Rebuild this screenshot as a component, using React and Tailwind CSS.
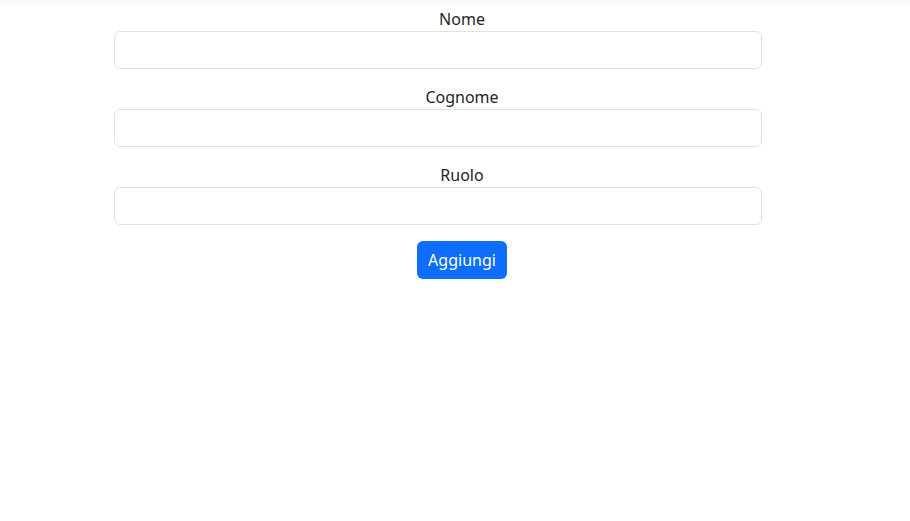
export default function App() {
  const fields = ["Nome", "Cognome", "Ruolo"];
  return (
    <div className="min-h-[521px] bg-white text-[#212529] text-[16px]" style={{ fontFamily: '"Segoe UI", "Noto Sans", sans-serif' }}>
      <div className="h-[4px] bg-[#fafafa]" />
      <div className="ml-[114px] w-[696px] pt-[3px] text-center">
        {fields.map((f) => (
          <div key={f} className="mb-4">
            <label className="block leading-6">{f}</label>
            <input
              type="text"
              className="block h-[38px] w-[648px] rounded-[6px] border border-[#dee2e6] bg-white px-3 outline-none"
            />
          </div>
        ))}
        <button className="h-[38px] w-[90px] rounded-[6px] bg-[#0d6efd] text-white leading-6">
          Aggiungi
        </button>
      </div>
    </div>
  );
}
